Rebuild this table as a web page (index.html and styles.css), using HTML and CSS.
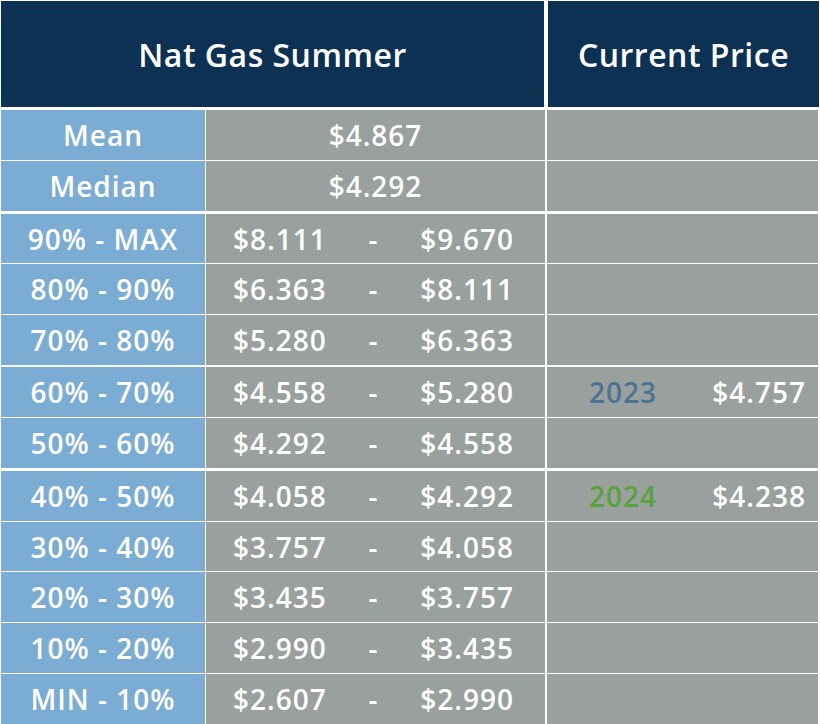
FILE: index.html
```html
<!DOCTYPE html>
<html>
<head>
<meta charset="utf-8">
<link rel="stylesheet" href="styles.css">
</head>
<body>
<div class="table">
  <div class="head">
    <div class="hcell hcell-main">Nat Gas Summer</div>
    <div class="hcell hcell-side">Current Price</div>
  </div>
  <div class="body">
    <div class="row">
      <div class="label">Mean</div>
      <div class="val single">$4.867</div>
      <div class="cur"></div>
    </div>
    <div class="row">
      <div class="label">Median</div>
      <div class="val single">$4.292</div>
      <div class="cur"></div>
    </div>
    <div class="row sep3">
      <div class="label">90% - MAX</div>
      <div class="val range"><span>$8.111</span><span class="dash">-</span><span class="hi">$9.670</span></div>
      <div class="cur"></div>
    </div>
    <div class="row">
      <div class="label">80% - 90%</div>
      <div class="val range"><span>$6.363</span><span class="dash">-</span><span class="hi">$8.111</span></div>
      <div class="cur"></div>
    </div>
    <div class="row">
      <div class="label">70% - 80%</div>
      <div class="val range"><span>$5.280</span><span class="dash">-</span><span class="hi">$6.363</span></div>
      <div class="cur"></div>
    </div>
    <div class="row sep2">
      <div class="label">60% - 70%</div>
      <div class="val range"><span>$4.558</span><span class="dash">-</span><span class="hi">$5.280</span></div>
      <div class="cur"><span class="year y2023">2023</span><span class="price">$4.757</span></div>
    </div>
    <div class="row">
      <div class="label">50% - 60%</div>
      <div class="val range"><span>$4.292</span><span class="dash">-</span><span class="hi">$4.558</span></div>
      <div class="cur"></div>
    </div>
    <div class="row sep3">
      <div class="label">40% - 50%</div>
      <div class="val range"><span>$4.058</span><span class="dash">-</span><span class="hi">$4.292</span></div>
      <div class="cur"><span class="year y2024">2024</span><span class="price">$4.238</span></div>
    </div>
    <div class="row">
      <div class="label">30% - 40%</div>
      <div class="val range"><span>$3.757</span><span class="dash">-</span><span class="hi">$4.058</span></div>
      <div class="cur"></div>
    </div>
    <div class="row">
      <div class="label">20% - 30%</div>
      <div class="val range"><span>$3.435</span><span class="dash">-</span><span class="hi">$3.757</span></div>
      <div class="cur"></div>
    </div>
    <div class="row">
      <div class="label">10% - 20%</div>
      <div class="val range"><span>$2.990</span><span class="dash">-</span><span class="hi">$3.435</span></div>
      <div class="cur"></div>
    </div>
    <div class="row">
      <div class="label">MIN - 10%</div>
      <div class="val range"><span>$2.607</span><span class="dash">-</span><span class="hi">$2.990</span></div>
      <div class="cur"></div>
    </div>
  </div>
</div>
</body>
</html>
```

FILE: styles.css
```css
*, *::before, *::after {
  box-sizing: border-box;
}

html, body {
  margin: 0;
  padding: 0;
  background: #ffffff;
}

body {
  width: 820px;
  height: 724px;
  overflow: hidden;
  font-family: "Open Sans", "Noto Sans", sans-serif;
  color: #ffffff;
}

.table {
  padding: 1px 0 0 1px;
  display: flex;
  flex-direction: column;
  gap: 3px;
}

.head {
  display: flex;
  gap: 4px;
  height: 106px;
  flex: none;
}

.hcell {
  flex: none;
  background: #0c3152;
  display: flex;
  align-items: center;
  justify-content: center;
  font-size: 32px;
  font-weight: 600;
  letter-spacing: 0.5px;
}

.hcell-main {
  width: 543px;
}

.hcell-side {
  width: 271px;
}

.body {
  height: 614px;
  display: flex;
  flex-direction: column;
  gap: 1px;
}

.row {
  flex: 1;
  display: flex;
  gap: 1px;
  font-size: 28px;
  font-weight: 600;
  letter-spacing: 1px;
}

.row.sep3 {
  margin-top: 2px;
}

.row.sep2 {
  margin-top: 1px;
}

.label {
  flex: none;
  width: 204px;
  background: #7aacd4;
  display: flex;
  align-items: center;
  justify-content: center;
}

.val {
  flex: none;
  width: 339px;
  background: #99a09e;
  margin-right: 1px;
}

.val.single {
  display: flex;
  align-items: center;
  justify-content: center;
}

.val.range {
  display: grid;
  grid-template-columns: 1fr auto 1fr;
  align-items: center;
  padding: 0 31px 0 27px;
}

.val.range .hi {
  justify-self: end;
}

.cur {
  flex: none;
  width: 271px;
  background: #99a09e;
  display: flex;
  align-items: center;
  justify-content: space-between;
  padding: 0 12px 0 42px;
}

.year.y2023 {
  color: #4a7394;
}

.year.y2024 {
  color: #58a23a;
}
```
